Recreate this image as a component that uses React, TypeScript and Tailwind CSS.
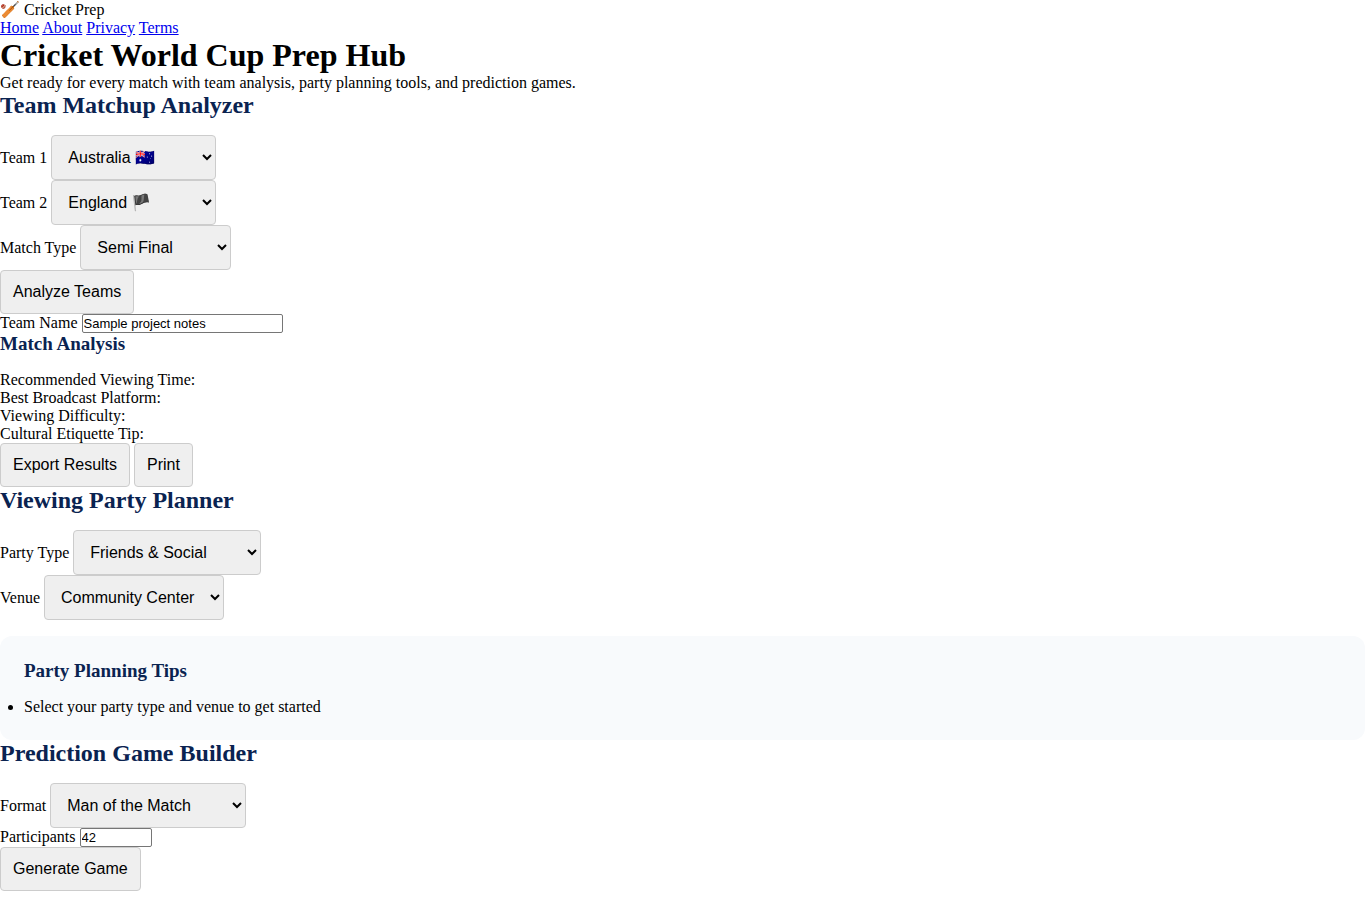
import { Fragment, useState } from "react";
import type { ReactNode } from "react";

const buttonClass =
  "h-11 rounded-[4px] border border-[#cccccc] bg-[#efefef] px-3 font-['Liberation_Sans',Arial,sans-serif] text-base text-black";

const inputClass =
  "rounded-[2px] border border-[#767676] bg-white px-px font-['Liberation_Sans',Arial,sans-serif] text-[13px] leading-[17px] text-black";

type SelectFieldProps = {
  id: string;
  label: string;
  options: string[];
  initial: string;
  widthClass: string;
};

function SelectField({ id, label, options, initial, widthClass }: SelectFieldProps) {
  const [value, setValue] = useState(initial);
  return (
    <div className="flex items-center gap-1">
      <label htmlFor={id}>{label}</label>
      <select
        id={id}
        value={value}
        onChange={(e) => setValue(e.target.value)}
        className={`${widthClass} h-[45px] rounded-[4px] border border-[#cccccc] bg-[#efefef] px-3 font-['Liberation_Sans',Arial,sans-serif] text-base text-black`}
      >
        {options.map((o) => (
          <option key={o}>{o}</option>
        ))}
      </select>
    </div>
  );
}

function SectionTitle({ children }: { children: ReactNode }) {
  return <h2 className="mb-4 text-2xl leading-[27px] font-bold text-[#0a2351]">{children}</h2>;
}

function SubTitle({ children }: { children: ReactNode }) {
  return <h3 className="mb-4 text-[19px] leading-[22px] font-bold text-[#0a2351]">{children}</h3>;
}

const teams = ["Australia 🇦🇺", "England 🏴", "India 🇮🇳", "New Zealand 🇳🇿", "Pakistan 🇵🇰", "South Africa 🇿🇦"];

export default function App() {
  return (
    <div className="bg-white font-['Liberation_Serif','Times_New_Roman',serif] text-base leading-[18px] text-black">
      <header>
        <div className="leading-[19px]">🏏 Cricket Prep</div>
        <nav>
          {["Home", "About", "Privacy", "Terms"].map((l) => (
            <Fragment key={l}>
              <a href="#" className="text-[#0000ee] underline">
                {l}
              </a>{" "}
            </Fragment>
          ))}
        </nav>
      </header>
      <main>
        <h1 className="text-[32px] leading-[37px] font-bold">Cricket World Cup Prep Hub</h1>
        <p>Get ready for every match with team analysis, party planning tools, and prediction games.</p>

        <section>
          <SectionTitle>Team Matchup Analyzer</SectionTitle>
          <SelectField id="team1" label="Team 1" options={teams} initial={teams[0]} widthClass="w-[165px]" />
          <SelectField id="team2" label="Team 2" options={teams} initial={teams[1]} widthClass="w-[165px]" />
          <SelectField
            id="match"
            label="Match Type"
            options={["Group Stage", "Semi Final", "Final"]}
            initial="Semi Final"
            widthClass="w-[151px]"
          />
          <button type="button" className={`${buttonClass} block`}>
            Analyze Teams
          </button>
          <div className="flex items-start gap-1">
            <label htmlFor="name">Team Name</label>
            <input id="name" type="text" defaultValue="Sample project notes" className={`${inputClass} w-[201px]`} />
          </div>
          <SubTitle>Match Analysis</SubTitle>
          <div>Recommended Viewing Time:</div>
          <div>Best Broadcast Platform:</div>
          <div>Viewing Difficulty:</div>
          <div>Cultural Etiquette Tip:</div>
          <div className="flex gap-1">
            <button type="button" className={buttonClass}>
              Export Results
            </button>
            <button type="button" className={buttonClass}>
              Print
            </button>
          </div>
        </section>

        <section>
          <SectionTitle>Viewing Party Planner</SectionTitle>
          <SelectField
            id="party"
            label="Party Type"
            options={["Friends & Social", "Family Gathering", "Corporate Event"]}
            initial="Friends & Social"
            widthClass="w-[188px]"
          />
          <SelectField
            id="venue"
            label="Venue"
            options={["Home", "Community Center", "Sports Bar"]}
            initial="Community Center"
            widthClass="w-[180px]"
          />
          <div className="mt-4 rounded-xl bg-[#f8fafc] p-6">
            <SubTitle>Party Planning Tips</SubTitle>
            <ul className="list-disc">
              <li>Select your party type and venue to get started</li>
            </ul>
          </div>
        </section>

        <section>
          <SectionTitle>Prediction Game Builder</SectionTitle>
          <SelectField
            id="format"
            label="Format"
            options={["Man of the Match", "Score Prediction", "Match Winner"]}
            initial="Man of the Match"
            widthClass="w-[196px]"
          />
          <div className="flex items-start gap-1">
            <label htmlFor="participants">Participants</label>
            <input id="participants" type="number" defaultValue={42} className={`${inputClass} w-[72px]`} />
          </div>
          <button type="button" className={`${buttonClass} block`}>
            Generate Game
          </button>
        </section>
      </main>
    </div>
  );
}
